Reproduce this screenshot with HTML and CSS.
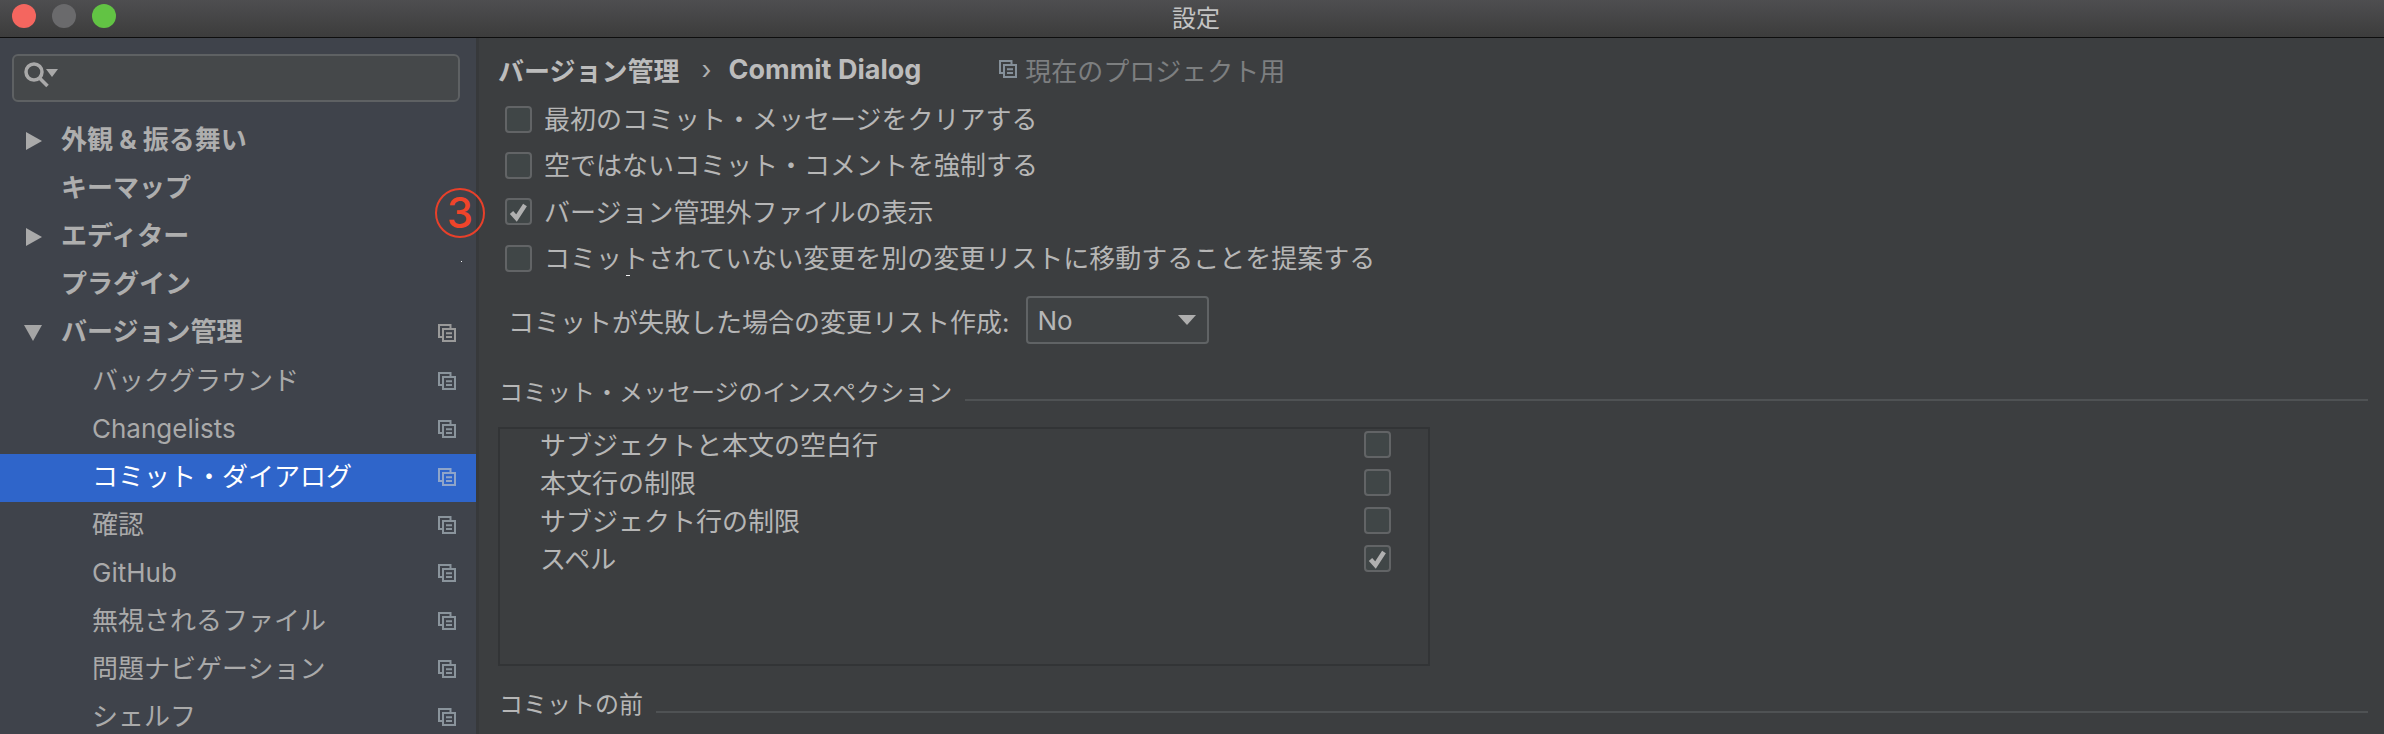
FILE: index.html
```html
<!DOCTYPE html>
<html lang="ja">
<head>
<meta charset="utf-8">
<title>設定</title>
<link rel="stylesheet" href="styles.css">
</head>
<body>
<svg class="defs" width="0" height="0" aria-hidden="true">
  <symbol id="copy" viewBox="0 0 18 18">
    <path d="M12.5 4.5V1H1v12h3.5" fill="none" stroke="currentColor" stroke-width="2"/>
    <rect x="5" y="5" width="12" height="12" fill="none" stroke="currentColor" stroke-width="2"/>
    <path d="M8 9.2h6M8 13h6" fill="none" stroke="currentColor" stroke-width="2"/>
  </symbol>
  <symbol id="tick" viewBox="0 0 27 27">
    <path d="M6.5 14.5l5 5.5 8.500-13" fill="none" stroke="currentColor" stroke-width="4.500"/>
  </symbol>
</svg>
<div class="window">
  <header class="titlebar">
    <div class="lights"><i class="light red"></i><i class="light grey"></i><i class="light green"></i></div>
    <div class="title">設定</div>
  </header>
  <div class="body">
    <aside class="sidebar">
      <div class="search">
        <svg class="search-icon" width="36" height="28" viewBox="0 0 36 28">
          <circle cx="11" cy="11" r="8" fill="none" stroke="currentColor" stroke-width="3.500"/>
          <path d="M16.500 17l8 8" fill="none" stroke="currentColor" stroke-width="3.500"/>
          <path d="M23 8h12l-6 8z" fill="currentColor"/>
        </svg>
      </div>
      <nav class="tree">
        <div class="row top"><span class="arrow right"></span><span class="label">外観 &amp; 振る舞い</span></div>
        <div class="row top"><span class="label">キーマップ</span></div>
        <div class="row top"><span class="arrow right"></span><span class="label">エディター</span></div>
        <div class="row top"><span class="label">プラグイン</span></div>
        <div class="row top"><span class="arrow down"></span><span class="label">バージョン管理</span><svg class="copy"><use href="#copy"/></svg></div>
        <div class="row child"><span class="label">バックグラウンド</span><svg class="copy"><use href="#copy"/></svg></div>
        <div class="row child"><span class="label">Changelists</span><svg class="copy"><use href="#copy"/></svg></div>
        <div class="row child selected"><span class="label">コミット・ダイアログ</span><svg class="copy"><use href="#copy"/></svg></div>
        <div class="row child"><span class="label">確認</span><svg class="copy"><use href="#copy"/></svg></div>
        <div class="row child"><span class="label">GitHub</span><svg class="copy"><use href="#copy"/></svg></div>
        <div class="row child"><span class="label">無視されるファイル</span><svg class="copy"><use href="#copy"/></svg></div>
        <div class="row child"><span class="label">問題ナビゲーション</span><svg class="copy"><use href="#copy"/></svg></div>
        <div class="row child"><span class="label">シェルフ</span><svg class="copy"><use href="#copy"/></svg></div>
      </nav>
    </aside>
    <main class="content">
      <div class="crumbs">
        <span class="crumb">バージョン管理</span>
        <span class="sep">›</span>
        <span class="crumb latin">Commit Dialog</span>
        <span class="scope"><svg class="copy"><use href="#copy"/></svg>現在のプロジェクト用</span>
      </div>
      <label class="check-row"><span class="box"></span><span class="txt">最初のコミット・メッセージをクリアする</span></label>
      <label class="check-row"><span class="box"></span><span class="txt">空ではないコミット・コメントを強制する</span></label>
      <label class="check-row"><span class="box"><svg class="tick"><use href="#tick"/></svg></span><span class="txt">バージョン管理外ファイルの表示</span></label>
      <label class="check-row"><span class="box"></span><span class="txt">コミットされていない変更を別の変更リストに移動することを提案する</span></label>
      <div class="combo-row">
        <span>コミットが失敗した場合の変更リスト作成:</span>
        <div class="combo"><span>No</span><i class="combo-caret"></i></div>
      </div>
      <div class="section first"><span>コミット・メッセージのインスペクション</span><i class="rule"></i></div>
      <div class="inspections">
        <div class="insp"><span class="insp-text">サブジェクトと本文の空白行</span><span class="box"></span></div>
        <div class="insp"><span class="insp-text">本文行の制限</span><span class="box"></span></div>
        <div class="insp"><span class="insp-text">サブジェクト行の制限</span><span class="box"></span></div>
        <div class="insp"><span class="insp-text">スペル</span><span class="box"><svg class="tick"><use href="#tick"/></svg></span></div>
      </div>
      <div class="section second"><span>コミットの前</span><i class="rule"></i></div>
    </main>
  </div>
  <div class="annotation"><span>3</span></div>
  <i class="speck speck-a"></i>
  <i class="speck speck-b"></i>
</div>
</body>
</html>
```
FILE: styles.css
```css
* { box-sizing: border-box; }
html, body { margin: 0; height: 100%; background: #3c3e40; overflow: hidden; }
body {
  font-family: "Inter", "Noto Sans CJK JP", sans-serif;
  font-size: 26px;
  color: #b6b6b6;
}
.defs { position: absolute; }
.window { position: relative; width: 2384px; height: 734px; overflow: hidden; }

.titlebar {
  position: relative;
  height: 38px;
  display: flex;
  align-items: center;
  justify-content: center;
  padding-left: 8px;
  background: linear-gradient(#4e4e50, #3c3c3c);
  border-bottom: 1px solid #0e0e0e;
}
.lights { position: absolute; left: 12px; top: 4px; display: flex; gap: 16px; }
.light { width: 24px; height: 24px; border-radius: 50%; }
.red { background: #f4665f; }
.grey { background: #6a6a6c; }
.green { background: #62c344; }
.title { font-size: 24px; line-height: 36px; color: #c4c4c4; }

.body { display: flex; height: 696px; }

.sidebar { width: 479px; flex: none; background: #3f434b; border-right: 3px solid #37393b; }
.search {
  margin: 16px 16px 16px 12px;
  height: 48px;
  background: #45484a;
  border: 2px solid #5e6163;
  border-radius: 6px;
  display: flex;
  align-items: center;
  padding: 0 0 6px 9px;
}
.search-icon { color: #a9a9a9; }

.row {
  height: 48px;
  display: flex;
  align-items: center;
  position: relative;
  padding-right: 20px;
}
.row .label { line-height: 44px; padding-bottom: 4px; height: 48px; }
.row.top { padding-left: 61px; font-weight: 700; color: #aeaeae; }
.row.child { padding-left: 92px; color: #aaaaaa; }
.row.child .label { line-height: 45px; padding-bottom: 3px; }
.row.selected { background: #2f65ca; color: #fff; }
.row .copy { margin-left: auto; margin-bottom: 2px; color: #8a949c; }
.row.top .copy { color: #9a9a9a; }
.row.selected .copy { color: #8fa5c9; }
.copy { width: 18px; height: 18px; flex: none; }

.arrow { position: absolute; width: 0; height: 0; }
.arrow.right {
  left: 26px; top: 14px;
  border-left: 16px solid #aaaaaa;
  border-top: 9px solid transparent;
  border-bottom: 9px solid transparent;
}
.arrow.down {
  left: 24px; top: 15px;
  border-top: 16px solid #a5a5a5;
  border-left: 9px solid transparent;
  border-right: 9px solid transparent;
}

.content { flex: 1; min-width: 0; padding: 11px 16px 0 20px; background: #3c3e40; }
.crumbs { display: flex; align-items: center; height: 40px; margin: 0 0 7px -1px; }
.crumb { font-weight: 700; color: #bcbcbc; }
.crumb.latin { font-size: 27px; }
.sep { margin: 0 17px 0 22px; color: #b0b0b0; font-size: 26px; }
.scope { display: flex; align-items: center; gap: 8px; margin-left: 78px; color: #7d7f80; }
.scope .copy { color: #85909a; }

.box {
  width: 27px;
  height: 27px;
  flex: none;
  display: block;
  background: #404647;
  border: 2px solid #626466;
  border-radius: 4px;
  position: relative;
  color: #b0b0b0;
}
.tick { position: absolute; left: -2px; top: -2px; width: 27px; height: 27px; }

.check-row { display: flex; align-items: center; height: 46.33px; padding-left: 6px; gap: 12px; }
.txt { padding-bottom: 3px; }

.combo-row { display: flex; align-items: center; height: 48px; margin-top: 15px; padding-left: 9px; gap: 16px; }
.combo {
  width: 183px;
  height: 48px;
  display: flex;
  align-items: center;
  justify-content: space-between;
  padding: 0 10px 0 10px;
  background: #3f4244;
  border: 2px solid #606365;
  border-radius: 4px;
}
.combo-caret {
  width: 0; height: 0;
  border-top: 10px solid #aeaeae;
  border-left: 9px solid transparent;
  border-right: 9px solid transparent;
  margin-right: 1px;
}

.section { display: flex; align-items: center; height: 40px; gap: 13px; font-size: 24px; }
.section span { line-height: 40px; }
.section.first { margin-top: 29px; }
.section.second { margin-top: 19px; }
.rule { flex: 1; height: 2px; background: #4f5254; margin-top: 14px; }

.inspections {
  width: 932px;
  height: 239px;
  margin: 14px 0 0 -1px;
  padding: 0 37px 0 40px;
  border: 2px solid #323436;
}
.insp { display: flex; align-items: center; justify-content: space-between; height: 38px; }
.insp:first-child { margin-top: -4px; }
.insp-text { padding-bottom: 2px; }

.annotation {
  position: absolute;
  left: 435px;
  top: 188px;
  width: 50px;
  height: 50px;
  border: 2px solid #e8402a;
  border-radius: 50%;
  display: flex;
  align-items: center;
  justify-content: center;
  color: #f0442a;
  font-family: "Inter", sans-serif;
  font-weight: 500;
  font-size: 42px;
  line-height: 46px;
}

.speck { position: absolute; background: #f2f2f2; }
.speck-a { left: 461px; top: 261px; width: 1px; height: 1px; }
.speck-b { left: 626px; top: 275px; width: 4px; height: 1px; }
```
